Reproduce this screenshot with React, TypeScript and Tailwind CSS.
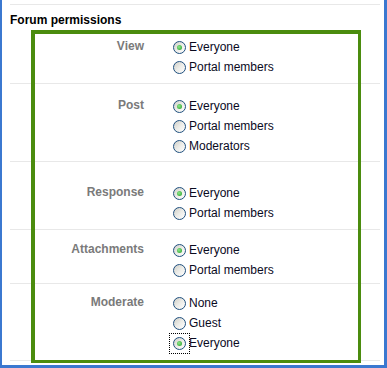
type Row = {
  label: string;
  options: string[];
  checked: number;
  pad: string;
  focused?: boolean;
};

const ROWS: Row[] = [
  { label: "View", options: ["Everyone", "Portal members"], checked: 0, pad: "pt-[10px] pb-[6px]" },
  { label: "Post", options: ["Everyone", "Portal members", "Moderators"], checked: 0, pad: "pt-[12px] pb-[5px]" },
  { label: "Response", options: ["Everyone", "Portal members"], checked: 0, pad: "pt-[21px] pb-[6px]" },
  { label: "Attachments", options: ["Everyone", "Portal members"], checked: 0, pad: "pt-[10px] pb-[3px]" },
  { label: "Moderate", options: ["None", "Guest", "Everyone"], checked: 2, pad: "pt-[9px] pb-[7px]", focused: true },
];

function Radio({ checked, focused }: { checked: boolean; focused?: boolean }) {
  return (
    <span
      className={
        "mr-[3px] flex h-[13px] w-[13px] shrink-0" +
        (focused ? " outline-1 outline-offset-[3px] outline-dotted outline-black" : "")
      }
    >
      <span className="flex h-[13px] w-[13px] items-center justify-center rounded-full border border-[#1f4f7e] bg-linear-to-br from-[#cfcfc8] via-[#ececE8] to-white">
        {checked && (
          <span className="h-[5px] w-[5px] rounded-full bg-[radial-gradient(circle_at_40%_40%,#8ee88e,#1f9b1f)]" />
        )}
      </span>
    </span>
  );
}

export default function App() {
  return (
    <div
      className="relative h-[368px] w-[387px] overflow-hidden border-b-[3px] border-l-2 border-r-[3px] border-[#3b78d0] bg-white text-[12px] leading-[14px] text-black"
      style={{ fontFamily: '"Liberation Sans", Arial, sans-serif' }}
    >
      <div className="pl-[8px] pr-[4px] pt-[4px]">
        <div className="border-t border-[#e8e8e8] pt-[8px]">
          <h2 className="font-bold leading-[14px]">Forum permissions</h2>
        </div>

        {ROWS.map((row) => (
          <div key={row.label} className={"flex border-b border-[#e8e8e8] " + row.pad}>
            <div className="w-[134px] pt-[2px] text-right font-bold text-[#7a7a7a]">{row.label}</div>
            <div className="ml-[29px] flex flex-col">
              {row.options.map((opt, i) => (
                <label key={opt} className="flex h-[20px] items-center">
                  <Radio checked={i === row.checked} focused={row.focused && i === row.checked} />
                  <span className="text-[#0a0a1e]">{opt}</span>
                </label>
              ))}
            </div>
          </div>
        ))}
      </div>

      {/* highlight frame drawn over the form */}
      <div className="pointer-events-none absolute left-[29px] top-[30px] h-[333px] w-[330px] border-b-[3px] border-l-4 border-r-[3px] border-t-4 border-[#4b8c0e]" />
    </div>
  );
}
